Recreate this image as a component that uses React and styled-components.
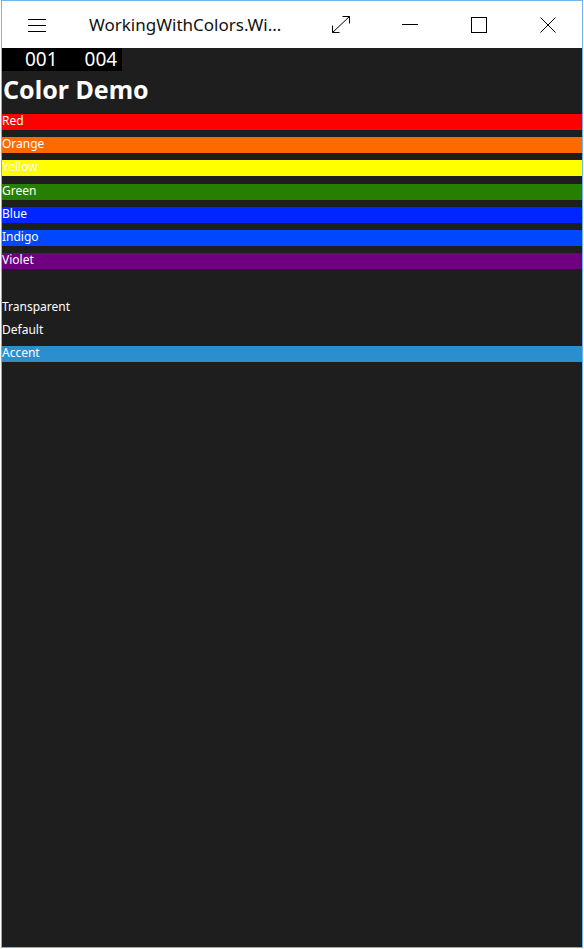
import React from 'react';
import styled, { createGlobalStyle } from 'styled-components';

const GlobalStyle = createGlobalStyle`
    html, body {
        margin: 0;
        padding: 0;
        background: #ffffff;
    }
    body {
        font-family: 'Noto Sans', 'Open Sans', sans-serif;
    }
`;

const colors = [
    { name: 'Red', bg: '#ff0000' },
    { name: 'Orange', bg: '#ff6a00' },
    { name: 'Yellow', bg: '#ffff00' },
    { name: 'Green', bg: '#267f00' },
    { name: 'Blue', bg: '#0026ff' },
    { name: 'Indigo', bg: '#0048ff' },
    { name: 'Violet', bg: '#6f007f' },
    { name: '', bg: 'transparent' },
    { name: 'Transparent', bg: 'transparent' },
    { name: 'Default', bg: 'transparent' },
    { name: 'Accent', bg: '#2a8ecf' },
];

const App = () => {
    return (
        <>
            <GlobalStyle />
            <Window>
                <TitleBar>
                    <MenuButton>
                        <svg width="18" height="14" viewBox="0 0 18 14">
                            <path d="M0 1.5h18M0 7.5h18M0 13.5h18" stroke="#000" strokeWidth="1" />
                        </svg>
                    </MenuButton>
                    <Title>WorkingWithColors.Wi...</Title>
                    <CaptionButton>
                        <svg width="20" height="19" viewBox="0 0 20 19">
                            <path d="M1.5 17.5L18.5 1.5M11.5 1.5h7v7M1.5 10.5v7h7" stroke="#000" strokeWidth="1" fill="none" />
                        </svg>
                    </CaptionButton>
                    <CaptionButton>
                        <svg width="16" height="2" viewBox="0 0 16 2">
                            <path d="M0 0.5h16" stroke="#000" strokeWidth="1" />
                        </svg>
                    </CaptionButton>
                    <CaptionButton>
                        <svg width="16" height="16" viewBox="0 0 16 16">
                            <rect x="0.5" y="0.5" width="15" height="15" stroke="#000" strokeWidth="1" fill="none" />
                        </svg>
                    </CaptionButton>
                    <CaptionButton>
                        <svg width="16" height="16" viewBox="0 0 16 16">
                            <path d="M0.5 0.5L15.5 15.5M15.5 0.5L0.5 15.5" stroke="#000" strokeWidth="1" />
                        </svg>
                    </CaptionButton>
                </TitleBar>
                <Content>
                    <Counter>
                        <span>001</span>
                        <span>004</span>
                    </Counter>
                    <Heading>Color Demo</Heading>
                    {colors.map(({ name, bg }, i) => (
                        <ColorRow key={i} $bg={bg}>
                            {name}
                        </ColorRow>
                    ))}
                </Content>
            </Window>
        </>
    );
};

const Window = styled.div`
    box-sizing: border-box;
    margin-left: 1px;
    width: 582px;
    height: 948px;
    border: 1px solid #6cb8ee;
    display: flex;
    flex-direction: column;
`;

const TitleBar = styled.div`
    display: flex;
    align-items: center;
    height: 47px;
    flex-shrink: 0;
    background: #ffffff;
`;

const MenuButton = styled.div`
    width: 70px;
    height: 100%;
    display: flex;
    align-items: center;
    justify-content: center;
    padding-top: 1px;
    box-sizing: border-box;
`;

const Title = styled.div`
    flex: 1;
    padding-left: 17px;
    font-family: 'Noto Sans', sans-serif;
    font-size: 17px;
    color: #111111;
    white-space: nowrap;
`;

const CaptionButton = styled.div`
    width: 69px;
    height: 100%;
    display: flex;
    align-items: center;
    justify-content: center;
`;

const Content = styled.div`
    flex: 1;
    background: #1e1e1e;
    color: #ffffff;
`;

const Counter = styled.div`
    display: flex;
    width: 120px;
    height: 23px;
    background: #000000;
    font-family: 'Noto Sans', sans-serif;
    font-size: 19px;
    line-height: 23px;
    padding-left: 23px;
    gap: 27px;
    box-sizing: border-box;
`;

const Heading = styled.h1`
    margin: 0 0 7px 0;
    padding-left: 1px;
    font-family: 'Noto Sans', sans-serif;
    font-size: 25px;
    font-weight: 700;
    line-height: 36px;
    color: #ffffff;
`;

const ColorRow = styled.div`
    height: 16px;
    margin-bottom: 7.2px;
    background: ${(p) => p.$bg};
    font-family: 'Noto Sans', sans-serif;
    font-size: 12px;
    line-height: 14px;
    color: #ffffff;
`;

export default App;
